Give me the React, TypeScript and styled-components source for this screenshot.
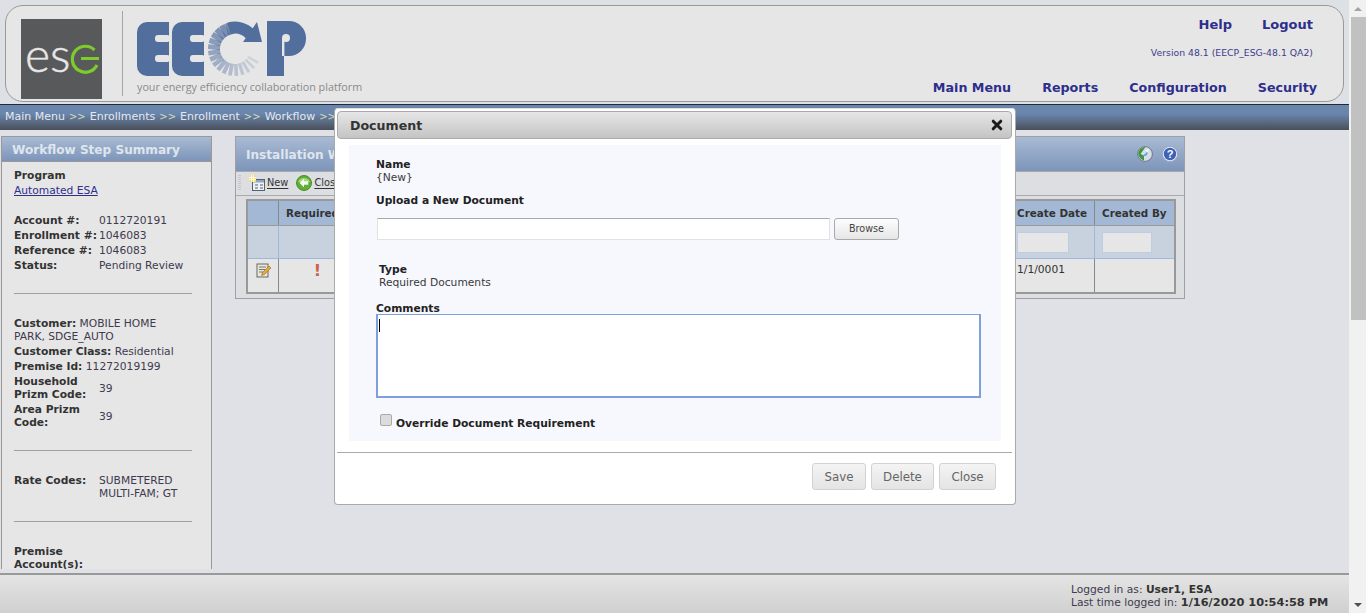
import React from "react";
import styled, { createGlobalStyle } from "styled-components";

const Global = createGlobalStyle`
  html, body { margin: 0; padding: 0; overflow: hidden; background: #e0e1e6; }
  * { box-sizing: border-box; }
  body { font-family: "DejaVu Sans", Verdana, sans-serif; font-size: 10.7px; line-height: 13px; color: #333; }
`;

const Page = styled.div`
  position: relative;
  display: flex;
  width: 1366px;
  height: 613px;
  overflow: hidden;
`;
const Main = styled.div`
  flex: 1;
  min-width: 0;
  display: flex;
  flex-direction: column;
`;
const Scrollbar = styled.div`
  width: 17px;
  display: flex;
  flex-direction: column;
  align-items: center;
  background: #f1f1f1;
`;
const ScrollArrow = styled.div<{ $down?: boolean }>`
  height: 17px;
  width: 17px;
  display: flex;
  align-items: center;
  justify-content: center;
  margin-top: ${(p) => (p.$down ? "auto" : "0")};
  &::before {
    content: "";
    border-left: 4px solid transparent;
    border-right: 4px solid transparent;
    ${(p) => (p.$down ? "border-top: 4px solid #505050;" : "border-bottom: 4px solid #a3a3a3;")}
  }
`;
const ScrollThumb = styled.div`
  width: 15px;
  height: 303px;
  margin-left: 1px;
  background: #c1c1c1;
`;

const HeaderWrap = styled.header`
  height: 104px;
  padding: 5px 5px 2px 5px;
  background: #dde0e5;
`;
const HeaderBox = styled.div`
  height: 97px;
  display: flex;
  border: 1px solid #999;
  border-radius: 18px;
  background: #e6e6e6;
  padding-left: 15px;
`;
const EsgLogo = styled.div`
  width: 81px;
  height: 80px;
  margin-top: 13px;
  background: #58595b;
`;
const Divider = styled.div`
  width: 1px;
  height: 85px;
  margin: 5px 0 0 20px;
  background: #a5a5a5;
`;
const Brand = styled.div`
  margin: 10px 0 0 14px;
  display: flex;
  flex-direction: column;
`;
const Tagline = styled.div`
  font-family: "Open Sans", sans-serif;
  font-size: 10.78px;
  line-height: 14px;
  color: #8a8a8a;
  white-space: nowrap;
  margin-top: -3px;
`;
const HeaderRight = styled.div`
  margin-left: auto;
  display: flex;
  flex-direction: column;
  align-items: flex-end;
`;
const TopLinks = styled.div`
  display: flex;
  gap: 30px;
  margin: 11px 30px 0 0;
`;
const NavLink = styled.a<{ $small?: boolean }>`
  font-size: ${(p) => (p.$small ? "12.7px" : "13px")};
  line-height: 16px;
  font-weight: bold;
  color: #2e2e8c;
  white-space: nowrap;
`;
const Version = styled.div`
  font-size: 9.3px;
  line-height: 12px;
  color: #3c3c8c;
  margin: 14px 30px 0 0;
`;
const MainNav = styled.nav`
  display: flex;
  gap: 31px;
  margin: 21px 26px 0 0;
`;

const Crumbs = styled.div`
  height: 26px;
  border-top: 1px solid #1f2a3a;
  background: linear-gradient(#6a86ad 0%, #6a86ad 35%, #4a4f5a 100%);
  padding: 5px 0 0 5px;
  font-size: 11px;
  color: #e4e9f1;
  white-space: nowrap;
  overflow: hidden;
`;
const Sep = styled.span`
  color: #d6dcb8;
  font-size: 10px;
  margin: 0 4px;
`;

const Content = styled.main`
  flex: 1;
  min-height: 0;
  display: flex;
  align-items: flex-start;
  padding: 6px 0 4px 1px;
`;

const Sidebar = styled.aside`
  width: 211px;
  align-self: stretch;
  flex: none;
  border: 1px solid #999;
  border-width: 0 1px;
  background: #e6e6e6;
  overflow: hidden;
`;
const SideTitle = styled.div`
  height: 26px;
  border-top: 1px solid #999;
  border-bottom: 1px solid #999;
  padding: 5px 0 0 10px;
  background: linear-gradient(#a9bad3, #7c95b9);
  color: #dfe5ee;
  font-size: 12.1px;
  line-height: 16px;
  font-weight: bold;
  white-space: nowrap;
`;
const SideBody = styled.div`
  padding: 6px 0 0 12px;
  width: 192px;
`;
const Row = styled.div`
  padding: 1px 0;
`;
const NarrowRow = styled(Row)`
  width: 165px;
`;
const Label = styled.b`
  color: #333;
`;
const A = styled.a`
  color: #2e2e8c;
  text-decoration: underline;
`;
const Gridded = styled.div<{ $top?: boolean }>`
  display: grid;
  grid-template-columns: 85px 90px;
  padding: 1px 0;
  align-items: ${(p) => (p.$top ? "start" : "center")};
`;
const OneLineLabel = styled(Label)`
  white-space: nowrap;
`;
const Value = styled.span`
  color: #403a4e;
`;
const Rule = styled.div<{ $t: number; $b: number }>`
  width: 178px;
  height: 1px;
  background: #a0a0a0;
  margin: ${(p) => p.$t}px 0 ${(p) => p.$b}px;
`;
const Gap = styled.div<{ $h: number }>`
  height: ${(p) => p.$h}px;
`;

const Panel = styled.section`
  width: 950px;
  height: 163px;
  margin-left: 23px;
  border: 1px solid #a0a0a0;
  background: #dcdee2;
  flex: none;
`;
const PanelTitle = styled.div`
  height: 34px;
  display: flex;
  align-items: center;
  padding: 0 6px 0 10px;
  background: linear-gradient(#a9bad3, #7c95b9);
  color: #dfe5ee;
  font-size: 12.1px;
  font-weight: bold;
  gap: 9px;
`;
const TitleText = styled.span`
  margin-right: auto;
  padding-top: 3px;
`;
const Toolbar = styled.div`
  height: 25px;
  display: flex;
  align-items: center;
  padding: 0 0 2px 2px;
  border-top: 1px solid #aaa;
  border-bottom: 1px solid #aaa;
  font-size: 9.8px;
`;
const Grip = styled.div`
  width: 3px;
  height: 15px;
  margin-right: 8px;
  background: repeating-linear-gradient(#c4c6ca 0 1px, transparent 1px 2px);
`;
const ToolItem = styled.a`
  display: flex;
  align-items: center;
  gap: 2px;
  margin-right: 8px;
  color: #333;
  & u { text-underline-offset: 2px; }
`;
const GridTable = styled.table`
  width: 930px;
  margin: 3px 0 0 10px;
  border: 2px solid #999;
  border-collapse: separate;
  border-spacing: 0;
  table-layout: fixed;
  background: #e6e6e6;
`;
const Th = styled.th`
  height: 24px;
  padding: 0 0 0 7px;
  text-align: left;
  background: #a3b8d4;
  border-right: 1px solid #888;
  font-size: 10.4px;
  white-space: nowrap;
  overflow: hidden;
  color: #333;
  &:last-child { border-right: 0; }
`;
const FilterCell = styled.td`
  height: 34px;
  padding: 0 0 0 7px;
  background: #c7d2de;
  border-top: 1px solid #999;
  border-right: 1px solid #9db8de;
  border-bottom: 1px solid #9db8de;
  &:last-child { border-right: 0; }
`;
const FilterInput = styled.div<{ $w: number }>`
  width: ${(p) => p.$w}px;
  height: 21px;
  background: #e6e6e6;
  border: 1px solid #bccde4;
`;
const Td = styled.td<{ $center?: boolean }>`
  height: 33px;
  padding: 4px 0 0 7px;
  vertical-align: top;
  border-right: 1px solid #888;
  text-align: ${(p) => (p.$center ? "center" : "left")};
  &:last-child { border-right: 0; }
`;
const IconCell = styled(Td)`
  padding-left: 8px;
`;
const Warn = styled.span`
  display: block;
  color: #cb6245;
  font-size: 16px;
  line-height: 16px;
  font-weight: bold;
  margin-left: -5px;
`;

const Footer = styled.footer`
  height: 40px;
  border-top: 2px solid #999;
  background: linear-gradient(#e4e4e4, #d0d0d0);
  display: flex;
  justify-content: flex-end;
  padding: 8px 20px 0 0;
  color: #403a4e;
`;
const FooterDate = styled.b`
  font-size: 11.35px;
  color: #333;
`;
const FooterText = styled.div`
  width: 258px;
  white-space: nowrap;
  & b { color: #333; }
`;

const Modal = styled.div`
  position: absolute;
  left: 334px;
  top: 108px;
  width: 682px;
  height: 397px;
  padding: 2px 3px 0 2px;
  background: #fff;
  border: 1px solid #aaa;
  border-top-color: #ddd;
  border-radius: 4px;
`;
const ModalTitle = styled.div`
  height: 28px;
  display: flex;
  align-items: center;
  justify-content: space-between;
  padding: 0 8px 0 12px;
  background: linear-gradient(#e6e6e6, #c4c4c4);
  border: 1px solid #aaa;
  border-radius: 4px;
  color: #333;
  font-size: 12.6px;
  font-weight: bold;
`;
const ModalBody = styled.div`
  height: 296px;
  margin: 6px 11px 0 12px;
  padding: 13px 0 0 27px;
  background: #f7f8fd;
`;
const Strong = styled.div<{ $mt?: number }>`
  font-weight: bold;
  color: #222;
  margin-top: ${(p) => p.$mt ?? 0}px;
`;
const Plain = styled.div`
  color: #3a3a3a;
`;
const TypeBlock = styled.div`
  margin: 23px 0 0 3px;
`;
const UploadRow = styled.div`
  display: flex;
  gap: 4px;
  margin: 11px 0 0 1px;
`;
const FileInput = styled.div`
  width: 453px;
  height: 22px;
  background: #fff;
  border: 1px solid #e2e2e2;
  border-top-color: #aaa;
`;
const BrowseButton = styled.button`
  width: 65px;
  height: 22px;
  padding: 0;
  font: 9.6px/20px "DejaVu Sans", sans-serif;
  color: #444;
  background: linear-gradient(#fdfdfd, #e6e6e6);
  border: 1px solid #aaa;
  border-radius: 3px;
`;
const CommentBox = styled.div`
  width: 605px;
  height: 84px;
  margin-top: -1px;
  padding: 2px 0 0 1px;
  background: #fff;
  border: 2px solid #7d9fdc;
  border-width: 1px 2px 2px 2px;
`;
const Caret = styled.div`
  width: 1px;
  height: 13px;
  margin-top: 2px;
  background: #000;
`;
const CheckRow = styled.div`
  display: flex;
  align-items: flex-start;
  gap: 4px;
  margin: 16px 0 0 4px;
`;
const CheckBox = styled.div`
  width: 12px;
  height: 12px;
  border: 1px solid #aaa;
  border-radius: 2px;
  background: #dcdcdc;
`;
const CheckLabel = styled.div`
  padding-top: 3px;
  font-weight: bold;
  color: #222;
`;
const ModalRule = styled.div`
  height: 1px;
  margin-top: 11px;
  background: #aaa;
`;
const ModalActions = styled.div`
  display: flex;
  justify-content: flex-end;
  gap: 5px;
  padding: 10px 16px 0 0;
`;
const ActionButton = styled.button<{ $w: number }>`
  width: ${(p) => p.$w}px;
  height: 27px;
  padding: 1px 0 0;
  font: 11.8px/24px "DejaVu Sans", sans-serif;
  color: #666;
  background: linear-gradient(#f4f4f4, #e4e4e4);
  border: 1px solid #d2d2d2;
  border-radius: 3px;
`;

const EsgMark = () => (
  <svg width="81" height="80" viewBox="0 0 81 80">
    <text x="4" y="53" fontFamily="Lato, sans-serif" fontSize="48" fontWeight="300" fill="#e6e6e6" stroke="#e6e6e6" strokeWidth=".5">es</text>
    <path d="M 73.5 31 A 13 13 0 1 0 76 46" fill="none" stroke="#7ecb2b" strokeWidth="3.2" />
    <path d="M 60 39.5 H 78" stroke="#7ecb2b" strokeWidth="3" />
  </svg>
);

const CX = 235;
const CY = 49;
const spokes = Array.from({ length: 17 }, (_, i) => {
  const deg = 105 + i * 14;
  const r = (deg * Math.PI) / 180;
  const t = i / 16;
  return {
    x1: CX + 15 * Math.cos(r),
    y1: CY - 15 * Math.sin(r),
    x2: CX + 27 * Math.cos(r),
    y2: CY - 27 * Math.sin(r),
    w: i < 7 ? 6.2 - i * 0.25 : 4.8 - (i - 7) * 0.26,
    o: 0.78 - t * 0.62,
  };
});

const EecpMark = () => (
  <svg width="175" height="67" viewBox="137 16 175 67">
    <g fill="#526e9d">
      <rect x="137" y="22" width="32" height="54" rx="10" />
      <rect x="172" y="22" width="32" height="54" rx="10" />
      <rect x="156" y="22" width="13" height="13" />
      <rect x="156" y="63" width="13" height="13" />
      <rect x="191" y="22" width="13" height="13" />
      <rect x="191" y="63" width="13" height="13" />
    </g>
    <g fill="#e6e6e6">
      <rect x="155" y="35" width="15" height="7" rx="3" />
      <rect x="155" y="55" width="15" height="7" rx="3" />
      <rect x="190" y="35" width="15" height="7" rx="3" />
      <rect x="190" y="55" width="15" height="7" rx="3" />
    </g>
    {spokes.map((s, i) => (
      <line key={i} x1={s.x1} y1={s.y1} x2={s.x2} y2={s.y2} stroke="#526e9d" strokeOpacity={s.o} strokeWidth={s.w} />
    ))}
    <path d="M 229 28.5 A 21 21 0 0 1 250 34" fill="none" stroke="#526e9d" strokeWidth="12" />
    <polygon points="257,22 262,42 243,42" fill="#526e9d" />
    <g fill="#526e9d">
      <rect x="267" y="21" width="17" height="55" />
      <rect x="267" y="21" width="39" height="35" rx="17" />
      <rect x="267" y="21" width="17" height="17" />
    </g>
    <circle cx="286" cy="38" r="4" fill="#e6e6e6" />
    <rect x="282" y="38" width="2.4" height="18" fill="#e6e6e6" />
  </svg>
);

const NewIcon = () => (
  <svg width="16" height="16" viewBox="0 0 16 16">
    <rect x="3.5" y="4.5" width="12" height="11" fill="#eef1f5" stroke="#55606e" />
    <rect x="4" y="5" width="11" height="2.5" fill="#8fa6c4" />
    <path d="M6 10h3M6 13h3M11 10h3M11 13h3" stroke="#55606e" />
    <rect x="0" y="0" width="7" height="7" fill="#f2df7a" />
    <path d="M0 2.5h7M0 4.5h7M2.5 0v7M4.5 0v7" stroke="#fff" strokeOpacity=".8" />
  </svg>
);
const BackIcon = () => (
  <svg width="16" height="16" viewBox="0 0 16 16">
    <circle cx="8" cy="8" r="7.5" fill="#62ad38" stroke="#4b9126" />
    <path d="M2 7a6.5 6.5 0 0 1 12 0z" fill="#a3d983" />
    <path d="M3.5 8 8 3.8V6.3h4.3v3.4H8v2.5z" fill="#f4f8ef" />
  </svg>
);
const EditIcon = () => (
  <svg width="16" height="15" viewBox="0 0 16 15">
    <rect x="1" y="1" width="11" height="13" fill="#e8e8e0" stroke="#66665e" />
    <path d="M3 4h7M3 6.5h6M3 9h4" stroke="#77776e" />
    <path d="M5.5 12.5 6.5 9.5 13 3l2 2-6.5 6.5z" fill="#e3a93c" stroke="#8a6a22" strokeWidth=".6" />
  </svg>
);
const RefreshIcon = () => (
  <svg width="16" height="16" viewBox="0 0 16 16">
    <circle cx="8" cy="8" r="7.4" fill="#d9dee6" stroke="#6d7785" />
    <path d="M8.5 1a7 7 0 0 0-7 8.5c1.2 2.6 3.2 4.5 5.5 5L7 9.5 3.5 8z" fill="#3f9440" />
    <path d="M5 10.5 12 4.2 9.6 9.4z" fill="#5aa7d6" />
    <path d="M8 4.5 12 3l-.6 4z" fill="#f2f5f9" />
  </svg>
);
const HelpIcon = () => (
  <svg width="16" height="16" viewBox="0 0 16 16">
    <circle cx="8" cy="8" r="7.6" fill="#e8edf6" stroke="#9aa9c4" />
    <circle cx="8" cy="8" r="6.2" fill="#3f62b5" />
    <text x="8" y="11.8" textAnchor="middle" fontFamily="Liberation Sans, sans-serif" fontWeight="bold" fontSize="11" fill="#fff">?</text>
  </svg>
);
const CloseX = () => (
  <svg width="12" height="12" viewBox="0 0 12 12">
    <path d="M2.2 2.2l7.6 7.6M9.8 2.2l-7.6 7.6" stroke="#1a1a1a" strokeWidth="3" strokeLinecap="round" />
  </svg>
);

export default function App() {
  return (
    <>
      <Global />
      <Page>
        <Main>
          <HeaderWrap>
            <HeaderBox>
              <EsgLogo>
                <EsgMark />
              </EsgLogo>
              <Divider />
              <Brand>
                <EecpMark />
                <Tagline>your energy efficiency collaboration platform</Tagline>
              </Brand>
              <HeaderRight>
                <TopLinks>
                  <NavLink>Help</NavLink>
                  <NavLink>Logout</NavLink>
                </TopLinks>
                <Version>Version 48.1 (EECP_ESG-48.1 QA2)</Version>
                <MainNav>
                  <NavLink $small>Main Menu</NavLink>
                  <NavLink $small>Reports</NavLink>
                  <NavLink $small>Configuration</NavLink>
                  <NavLink $small>Security</NavLink>
                </MainNav>
              </HeaderRight>
            </HeaderBox>
          </HeaderWrap>
          <Crumbs>
            Main Menu<Sep>&gt;&gt;</Sep>Enrollments<Sep>&gt;&gt;</Sep>Enrollment<Sep>&gt;&gt;</Sep>Workflow<Sep>&gt;&gt;</Sep>Installation Workflow
          </Crumbs>
          <Content>
            <Sidebar>
              <SideTitle>Workflow Step Summary</SideTitle>
              <SideBody>
                <Row><Label>Program</Label></Row>
                <Row><A>Automated ESA</A></Row>
                <Gap $h={15} />
                <Gridded><OneLineLabel>Account #:</OneLineLabel><Value>0112720191</Value></Gridded>
                <Gridded><OneLineLabel>Enrollment #:</OneLineLabel><Value>1046083</Value></Gridded>
                <Gridded><OneLineLabel>Reference #:</OneLineLabel><Value>1046083</Value></Gridded>
                <Gridded><OneLineLabel>Status:</OneLineLabel><Value>Pending Review</Value></Gridded>
                <Rule $t={20} $b={22} />
                <NarrowRow><Label>Customer:</Label> <Value>MOBILE HOME PARK, SDGE_AUTO</Value></NarrowRow>
                <Row><Label>Customer Class:</Label> <Value>Residential</Value></Row>
                <Row><Label>Premise Id:</Label> <Value>11272019199</Value></Row>
                <Gridded><Label>Household Prizm Code:</Label><Value>39</Value></Gridded>
                <Gridded><Label>Area Prizm Code:</Label><Value>39</Value></Gridded>
                <Rule $t={20} $b={22} />
                <Gridded $top><Label>Rate Codes:</Label><Value>SUBMETERED MULTI-FAM; GT</Value></Gridded>
                <Rule $t={20} $b={22} />
                <Gridded><Label>Premise Account(s):</Label><Value></Value></Gridded>
              </SideBody>
            </Sidebar>
            <Panel>
              <PanelTitle>
                <TitleText>Installation Workflow</TitleText>
                <RefreshIcon />
                <HelpIcon />
              </PanelTitle>
              <Toolbar>
                <Grip />
                <ToolItem><NewIcon /><u>New</u></ToolItem>
                <ToolItem><BackIcon /><u>Close</u></ToolItem>
              </Toolbar>
              <GridTable>
                <colgroup>
                  <col width="31" />
                  <col width="76" />
                  <col />
                  <col width="85" />
                  <col width="79" />
                </colgroup>
                <thead>
                  <tr>
                    <Th></Th>
                    <Th>Required</Th>
                    <Th>Document</Th>
                    <Th>Create Date</Th>
                    <Th>Created By</Th>
                  </tr>
                  <tr>
                    <FilterCell></FilterCell>
                    <FilterCell></FilterCell>
                    <FilterCell></FilterCell>
                    <FilterCell><FilterInput $w={52} /></FilterCell>
                    <FilterCell><FilterInput $w={50} /></FilterCell>
                  </tr>
                </thead>
                <tbody>
                  <tr>
                    <IconCell><EditIcon /></IconCell>
                    <Td $center><Warn>!</Warn></Td>
                    <Td></Td>
                    <Td>1/1/0001</Td>
                    <Td></Td>
                  </tr>
                </tbody>
              </GridTable>
            </Panel>
          </Content>
          <Footer>
            <FooterText>
              Logged in as: <b>User1, ESA</b>
              <br />
              Last time logged in: <FooterDate>1/16/2020 10:54:58 PM</FooterDate>
            </FooterText>
          </Footer>
        </Main>
        <Scrollbar>
          <ScrollArrow />
          <ScrollThumb />
          <ScrollArrow $down />
        </Scrollbar>
        <Modal>
          <ModalTitle>
            Document
            <CloseX />
          </ModalTitle>
          <ModalBody>
            <Strong>Name</Strong>
            <Plain>{"{New}"}</Plain>
            <Strong $mt={10}>Upload a New Document</Strong>
            <UploadRow>
              <FileInput />
              <BrowseButton>Browse</BrowseButton>
            </UploadRow>
            <TypeBlock>
              <Strong>Type</Strong>
              <Plain>Required Documents</Plain>
            </TypeBlock>
            <Strong $mt={13}>Comments</Strong>
            <CommentBox>
              <Caret />
            </CommentBox>
            <CheckRow>
              <CheckBox />
              <CheckLabel>Override Document Requirement</CheckLabel>
            </CheckRow>
          </ModalBody>
          <ModalRule />
          <ModalActions>
            <ActionButton $w={54}>Save</ActionButton>
            <ActionButton $w={63}>Delete</ActionButton>
            <ActionButton $w={57}>Close</ActionButton>
          </ModalActions>
        </Modal>
      </Page>
    </>
  );
}
